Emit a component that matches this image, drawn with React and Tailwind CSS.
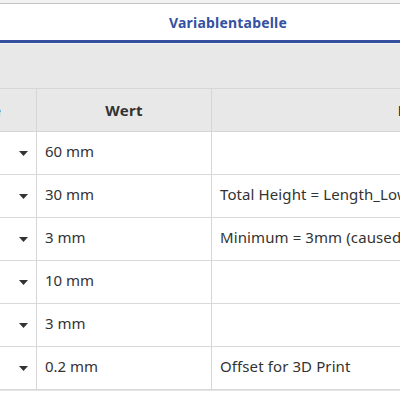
import React from 'react';

const rows = [
  { value: '60 mm', desc: '' },
  { value: '30 mm', desc: 'Total Height = Length_Lower_Part + Length_Upper_Part' },
  { value: '3 mm', desc: 'Minimum = 3mm (caused by the thread)' },
  { value: '10 mm', desc: '' },
  { value: '3 mm', desc: '' },
  { value: '0.2 mm', desc: 'Offset for 3D Print' },
];

function Caret() {
  return (
    <svg width="9" height="5" viewBox="0 0 9 5" className="text-[#333]">
      <path d="M0 0h9L4.5 5z" fill="currentColor" />
    </svg>
  );
}

export default function App() {
  return (
    <div className="w-[400px] h-[400px] overflow-hidden bg-white text-[#333]" style={{ fontFamily: '"Noto Sans", Roboto, sans-serif' }}>
      {/* top strip */}
      <div className="h-[3px] bg-[#f2f2f2]" />
      <div className="h-[1px] bg-[#c4c4c4]" />

      {/* tab */}
      <div className="h-[36px] flex items-center justify-center pl-[56px]">
        <span className="text-[14px] font-bold text-[#3552a2] tracking-[0.2px]">Variablentabelle</span>
      </div>
      <div className="h-[3px] bg-[#34509f]" />
      <div className="h-[1px] bg-[#f0f0f0]" />

      {/* toolbar band */}
      <div className="h-[44px] bg-[#e8e8e8]" />

      {/* table */}
      <div className="border-t border-[#d6d6d6]">
        <div className="flex h-[43px] bg-[#e8e8e8] border-b border-[#d6d6d6]">
          <div className="w-[37px] shrink-0 border-r border-[#d6d6d6] overflow-hidden flex justify-end items-center pr-[35px]">
            <span className="text-[15px] font-bold whitespace-nowrap">Name</span>
          </div>
          <div className="w-[175px] shrink-0 border-r border-[#d6d6d6] flex items-center justify-center">
            <span className="text-[15px] font-bold tracking-[0.3px]">Wert</span>
          </div>
          <div className="w-[474px] shrink-0 flex items-center justify-center">
            <span className="text-[15px] font-bold whitespace-nowrap">Beschreibung</span>
          </div>
        </div>
        {rows.map((r, i) => (
          <div key={i} className="flex h-[43px] border-b border-[#d9d9d9]">
            <div className="w-[37px] shrink-0 border-r border-[#d6d6d6] flex items-center justify-end pr-[8px]">
              <Caret />
            </div>
            <div className="w-[175px] shrink-0 border-r border-[#d6d6d6] flex items-center pl-[8px] pb-[3px]">
              <span className="text-[15px] whitespace-nowrap">{r.value}</span>
            </div>
            <div className="w-[474px] shrink-0 flex items-center pl-[8px] pb-[3px]">
              <span className="text-[15px] whitespace-nowrap tracking-[0.1px]">{r.desc}</span>
            </div>
          </div>
        ))}
        <div className="h-[1px] bg-[#e4e4e4]" />
      </div>
    </div>
  );
}
